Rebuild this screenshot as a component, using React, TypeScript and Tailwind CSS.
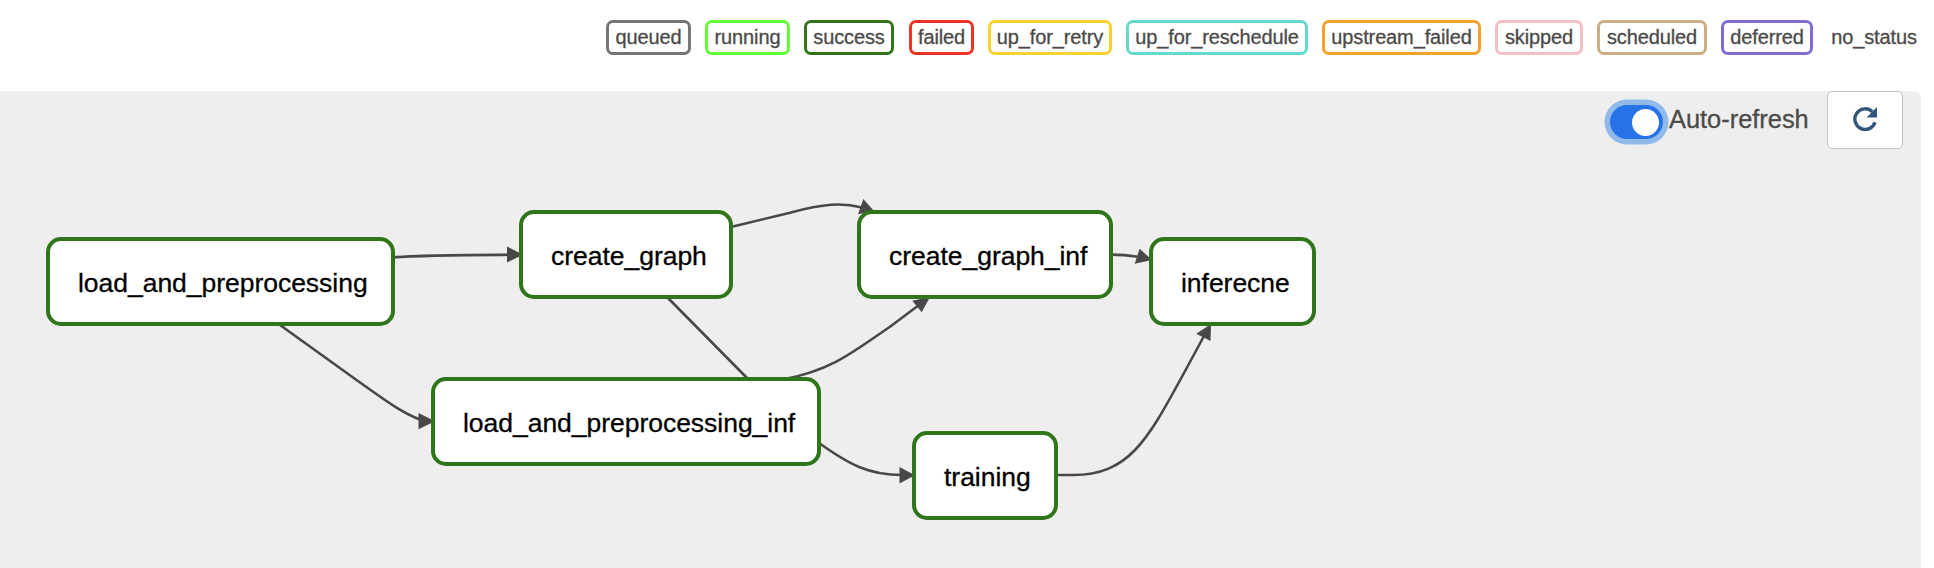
import React from "react";

const states = [
  { name: "queued", box: "w-[85px] border-[#757575]" },
  { name: "running", box: "ml-[14px] w-[85px] border-[#62fb34]" },
  { name: "success", box: "ml-[14px] w-[90px] border-[#2f7519]" },
  { name: "failed", box: "ml-[15px] w-[65px] border-[#ee3323]" },
  { name: "up_for_retry", box: "ml-[14px] w-[124px] border-[#f9d133]" },
  { name: "up_for_reschedule", box: "ml-[14px] w-[182px] border-[#65dacb]" },
  { name: "upstream_failed", box: "ml-[14px] w-[159px] border-[#f4a02a]" },
  { name: "skipped", box: "ml-[14px] w-[88px] border-[#f7bdc6]" },
  { name: "scheduled", box: "ml-[14px] w-[110px] border-[#cbae82]" },
  { name: "deferred", box: "ml-[14px] w-[92px] border-[#836bd3]" },
  { name: "no_status", box: "ml-[9px] w-[104px] border-white" },
];

const nodes = [
  { name: "load_and_preprocessing", pos: "left-[46px] top-[146px] w-[349px]" },
  { name: "create_graph", pos: "left-[519px] top-[119px] w-[214px]" },
  { name: "load_and_preprocessing_inf", pos: "left-[431px] top-[286px] w-[390px]" },
  { name: "create_graph_inf", pos: "left-[857px] top-[119px] w-[256px]" },
  { name: "inferecne", pos: "left-[1149px] top-[146px] w-[167px]" },
  { name: "training", pos: "left-[912px] top-[340px] w-[146px]" },
];

const edges = [
  "M392 257.4C425 255 455 255 509 254.8",
  "M280 325L360 382.5C385 400 402 413 420 419.5",
  "M731 227L790 212.7C824 203.5 842 202.5 862 207.5",
  "M668 298L748 379",
  "M785 379C832 370 853 352 890 326.7L919 305",
  "M819 443C850 465 869 475 902 475",
  "M1056 475H1073C1131 475 1149 437 1186.7 368L1204 336",
  "M1111 254.6C1122 254.6 1128 255.2 1138 256.8",
];

const arrowHeads = [
  "507,246.5 507,262.5 523,254.7",
  "418.5,413 418.5,429.3 435,421.3",
  "863.3,199 858,214.3 874,211",
  "912.3,300.7 921.7,312.3 930,297",
  "899.5,467 899.5,483.5 915,475.2",
  "1196.3,333.7 1210.5,341 1211,324",
  "1139.7,248.7 1134.7,263.8 1152,260",
];

function Legend() {
  return (
    <div className="flex h-[91px] shrink-0 pt-5 pl-[606px]">
      {states.map((s) => (
        <div
          key={s.name}
          className={`flex h-[35px] shrink-0 items-center justify-center rounded-[7px] border-3 pb-px text-[20px] leading-none tracking-[-0.13px] whitespace-nowrap ${s.box}`}
        >
          {s.name}
        </div>
      ))}
    </div>
  );
}

function Controls() {
  return (
    <div className="flex justify-end pr-[18px]">
      <div className="mt-[14px] mr-[6px] flex h-[34px] w-[53px] items-center justify-end rounded-full bg-[#2673e8] pr-1 ring-[5.5px] ring-[#8fbaea]">
        <div className="size-[27px] rounded-full bg-white" />
      </div>
      <div className="mt-[11px] mr-[18px] w-[140px] text-[25.4px] leading-[34px] whitespace-nowrap">
        Auto-refresh
      </div>
      <button
        aria-label="Refresh"
        className="flex h-[58px] w-[76px] items-start justify-center rounded-[5px] border border-[#c3c3c3] bg-white pt-[15px]"
      >
        <svg viewBox="0 0 24 24" className="size-6 text-[#34567c]" fill="none">
          <path d="M22 15.2A10.3 10.3 0 1 1 19.3 4.7" stroke="currentColor" strokeWidth="3.4" />
          <path d="M24 0V10.5H13.6Z" fill="currentColor" />
        </svg>
      </button>
    </div>
  );
}

export default function App() {
  return (
    <div className="flex h-[568px] w-[1934px] flex-col overflow-hidden bg-white font-['Liberation_Sans',Arial,sans-serif] text-[#4b4a49] [-webkit-text-stroke:0.3px]">
      <Legend />
      <div className="relative w-[1921px] flex-1 rounded-tr-[7px] bg-[#eeeeee]">
        <Controls />
        <svg viewBox="0 91 1921 477" className="absolute top-0 left-0 h-[477px] w-[1921px] text-[#484848]">
          {edges.map((d) => (
            <path key={d} d={d} fill="none" stroke="currentColor" strokeWidth="2.6" />
          ))}
          {arrowHeads.map((p) => (
            <polygon key={p} points={p} fill="currentColor" />
          ))}
        </svg>
        {nodes.map((n) => (
          <div
            key={n.name}
            className={`absolute flex h-[89px] items-center rounded-[15px] border-4 border-[#2f7519] bg-white pt-[3px] pl-7 text-[26.5px] leading-none tracking-[-0.03px] whitespace-nowrap text-black ${n.pos}`}
          >
            {n.name}
          </div>
        ))}
      </div>
    </div>
  );
}
